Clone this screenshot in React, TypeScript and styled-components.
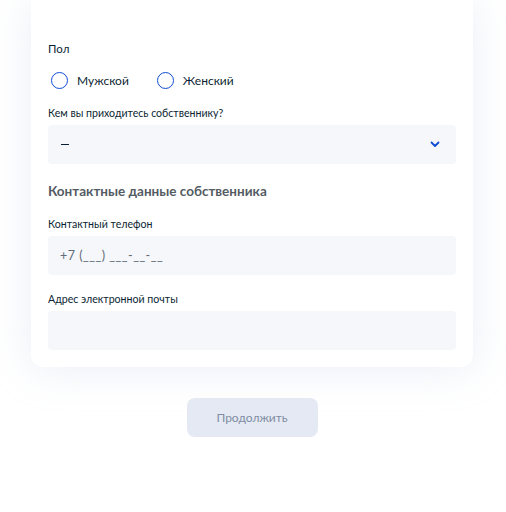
import React from "react";
import styled, { createGlobalStyle } from "styled-components";

const Global = createGlobalStyle`
  html, body { margin: 0; padding: 0; background: #ffffff; }
  body { font-family: Lato, "Noto Sans", sans-serif; color: #0b1f33; }
`;

const Page = styled.div`
  display: flex;
  flex-direction: column;
  align-items: center;
  padding: 0 33px 0 31px;
`;

const Card = styled.div`
  align-self: stretch;
  background: #ffffff;
  border-radius: 0 0 12px 12px;
  box-shadow: 0 2px 40px rgba(180, 195, 225, 0.28);
  padding: 41px 17px 17px 17px;
  display: flex;
  flex-direction: column;
`;

const Label = styled.div<{ $gap?: number; $size?: number }>`
  font-size: ${(p) => p.$size ?? 10.6}px;
  line-height: 16px;
  color: #0b1f33;
  margin-bottom: ${(p) => p.$gap ?? 4}px;
`;

const RadioRow = styled.div`
  display: flex;
  align-items: center;
  gap: 28px;
  height: 20px;
  margin: 13px 0 15px 0;
  padding-left: 3px;
`;

const RadioItem = styled.label`
  display: flex;
  align-items: center;
  gap: 9px;
  font-size: 12px;
  color: #0b1f33;
`;

const Circle = styled.span`
  width: 15px;
  height: 15px;
  border: 1.5px solid #0d4cd3;
  border-radius: 50%;
  box-sizing: content-box;
`;

const Field = styled.div`
  height: 39px;
  background: #f5f7fa;
  border-radius: 4px;
  display: flex;
  align-items: center;
  justify-content: space-between;
  padding: 0 16px 0 12px;
  font-size: 12.5px;
  letter-spacing: 0.5px;
  color: #5f6b78;
`;

const Dash = styled.span`
  display: block;
  width: 8px;
  height: 1.5px;
  background: #0b1f33;
  margin-left: 1px;
`;

const Heading = styled.div`
  font-size: 13.5px;
  font-weight: 700;
  line-height: 20px;
  color: #535b63;
  margin: 17px 0 15px 0;
`;

const Spacer = styled.div<{ $h: number }>`
  height: ${(p) => p.$h}px;
`;

const Button = styled.button`
  margin-top: 31px;
  width: 131px;
  height: 39px;
  border: none;
  border-radius: 8px;
  background: #e4e9f4;
  color: #7f8ca1;
  font-family: Lato, "Noto Sans", sans-serif;
  font-size: 12px;
`;

const Chevron = () => (
  <svg width="10" height="7" viewBox="0 0 10 7" fill="none">
    <path d="M1.5 1.5 L5 5 L8.5 1.5" stroke="#0d4cd3" strokeWidth="1.8" strokeLinecap="round" strokeLinejoin="round" />
  </svg>
);

export default function App() {
  return (
    <>
      <Global />
      <Page>
        <Card>
          <Label $gap={0} $size={11.5}>Пол</Label>
          <RadioRow>
            <RadioItem>
              <Circle />
              Мужской
            </RadioItem>
            <RadioItem>
              <Circle />
              Женский
            </RadioItem>
          </RadioRow>
          <Label>Кем вы приходитесь собственнику?</Label>
          <Field>
            <Dash />
            <Chevron />
          </Field>
          <Heading>Контактные данные собственника</Heading>
          <Label>Контактный телефон</Label>
          <Field>+7 (___) ___-__-__</Field>
          <Spacer $h={16} />
          <Label>Адрес электронной почты</Label>
          <Field />
        </Card>
        <Button>Продолжить</Button>
      </Page>
    </>
  );
}
